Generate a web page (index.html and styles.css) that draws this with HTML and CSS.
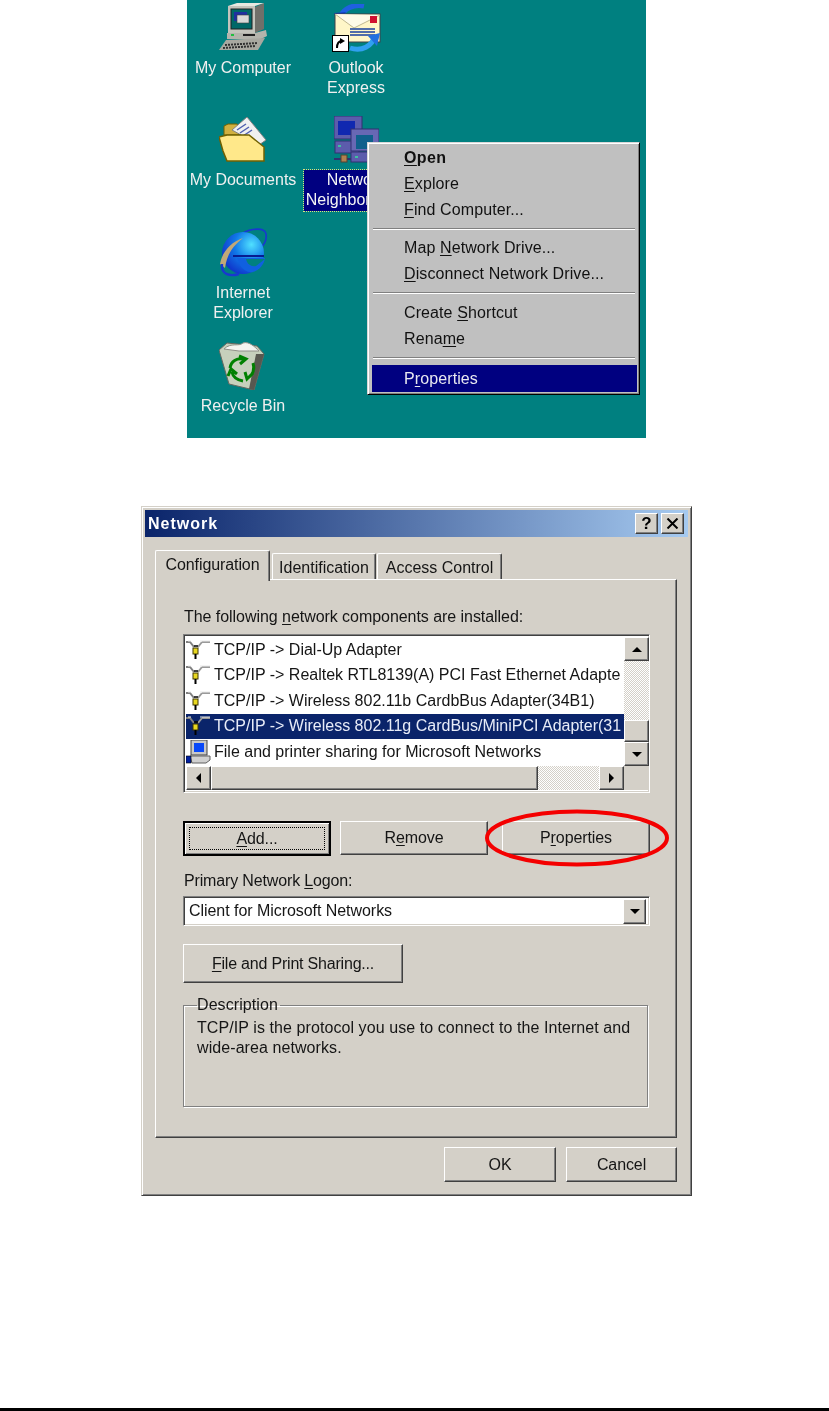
FILE: index.html
```html
<!DOCTYPE html>
<html lang="en">
<head>
    <meta charset="UTF-8">
    <meta name="viewport" content="width=device-width, initial-scale=1.0">
    <title>Network Neighborhood - Properties</title>
    <link rel="stylesheet" href="styles.css">
</head>
<body>
    <svg class="defs" width="0" height="0" aria-hidden="true">
        <defs>
            <symbol id="icon-tcp" viewBox="0 0 25 20">
                <path d="M0 2H4L8 7" fill="none" stroke="#808080" stroke-width="2"/>
                <path d="M16 2H24M16 2L12 7" fill="none" stroke="#9a9a9a" stroke-width="2"/>
                <path d="M5 1H2M14 1H24" stroke="#e8e8e8" stroke-width="1"/>
                <path d="M8 6L12 6" stroke="#000" stroke-width="1.5"/>
                <rect x="7" y="8" width="5" height="6" fill="#e8d820" stroke="#403800"/>
                <rect x="8.5" y="14" width="2" height="5" fill="#000"/>
            </symbol>
        </defs>
    </svg>

    <div class="desktop">
        <div class="desk-icon icon-computer">
            <svg width="49" height="49" viewBox="0 0 49 49">
                <path d="M36 4L45 0V26L36 30Z" fill="#70706a"/>
                <path d="M9 3L36 3L45 0L18 0Z" fill="#e8e8e0"/>
                <rect x="9" y="3" width="27" height="27" fill="#c4c4bc"/>
                <rect x="12" y="6" width="21" height="20" fill="#006868" stroke="#202020"/>
                <rect x="15" y="9" width="13" height="9" fill="#2030a0"/>
                <rect x="18" y="12" width="12" height="8" fill="#d8d8d8" stroke="#404040" stroke-width=".6"/>
                <path d="M8 30H36L47 27L48 33L42 36H8Z" fill="#b4b4ac"/>
                <rect x="12" y="31" width="3" height="2" fill="#20c040"/>
                <rect x="24" y="31" width="12" height="2" fill="#202020"/>
                <path d="M7 37L46 35L39 47H0Z" fill="#a8a8a0"/>
                <path d="M6 42L38 40M4 45L36 43" stroke="#303030" stroke-width="2" stroke-dasharray="2 1"/>
            </svg>
            <span class="desk-label">My Computer</span>
        </div>

        <div class="desk-icon icon-outlook">
            <svg width="49" height="48" viewBox="0 0 49 48">
                <path d="M32 2C22 0 12 4 8 13" fill="none" stroke="#2060e0" stroke-width="5"/>
                <path d="M2 9L14 8L7 18Z" fill="#1040c0"/>
                <rect x="3" y="10" width="45" height="28" fill="#fff6c8" stroke="#404048"/>
                <path d="M3 10L22 24L48 11" fill="#fffbe8" stroke="#c0b890"/>
                <rect x="38" y="12" width="7" height="7" fill="#d01030"/>
                <path d="M18 25H43M18 28H43M18 31H43" stroke="#1840a0" stroke-width="1.5"/>
                <path d="M18 44C30 48 40 42 43 32" fill="none" stroke="#30a0f0" stroke-width="5"/>
                <path d="M36 32L48 29L45 42Z" fill="#2070e0"/>
                <rect x="0.5" y="31.5" width="16" height="16" fill="#fff" stroke="#000"/>
                <path d="M5 44C5 39 7 37 10 37" fill="none" stroke="#000" stroke-width="2"/>
                <path d="M8 34L13 37L8 40Z" fill="#000"/>
            </svg>
            <span class="desk-label">Outlook<br>Express</span>
        </div>

        <div class="desk-icon icon-documents">
            <svg width="49" height="45" viewBox="0 0 49 45">
                <path d="M5 18V9L9 7H18L20 10V18Z" fill="#d0b040" stroke="#706000"/>
                <path d="M13 13L28 0L47 23L40 28Z" fill="#f0f0f0" stroke="#808080"/>
                <path d="M18 13L27 7M21 16L30 10M24 19L33 13" stroke="#5060b0" stroke-width="1.5"/>
                <path d="M0 20L8 18H30L45 30V44H8L4 34Z" fill="#ffe88a" stroke="#706000" stroke-width="1.5"/>
            </svg>
            <span class="desk-label">My Documents</span>
        </div>

        <div class="desk-icon icon-network">
            <svg width="45" height="47" viewBox="0 0 45 47">
                <rect x="0" y="0" width="28" height="23" fill="#5c5cac" stroke="#303070"/>
                <rect x="4" y="5" width="17" height="14" fill="#1028b0"/>
                <rect x="1" y="25" width="24" height="12" fill="#5c5cac" stroke="#303070"/>
                <rect x="4" y="29" width="3" height="2" fill="#40c0a0"/>
                <rect x="17" y="13" width="28" height="22" fill="#6868b4" stroke="#303070"/>
                <rect x="22" y="19" width="17" height="14" fill="#10608c"/>
                <rect x="17" y="36" width="25" height="10" fill="#5c5cac" stroke="#303070"/>
                <rect x="21" y="40" width="3" height="2" fill="#40c0a0"/>
                <path d="M0 43H17" stroke="#303070" stroke-width="2"/>
                <rect x="7" y="39" width="6" height="7" fill="#b08050" stroke="#504030"/>
            </svg>
            <span class="desk-label selected">Network<br>Neighborhood</span>
        </div>

        <div class="desk-icon icon-ie">
            <svg width="49" height="49" viewBox="0 0 49 49">
                <defs>
                    <radialGradient id="ie-fill" cx="0.7" cy="0.3" r="0.8">
                        <stop offset="0" stop-color="#50e0ff"/>
                        <stop offset="0.5" stop-color="#1078e8"/>
                        <stop offset="1" stop-color="#1030c8"/>
                    </radialGradient>
                </defs>
                <path d="M22 6C32 0 46 -1 47 6C48 11 45 17 41 21" fill="none" stroke="#1838d0" stroke-width="1.6"/>
                <circle cx="24" cy="25" r="21" fill="url(#ie-fill)"/>
                <path d="M18 30H46C45 36 41 42 34 44C29 45 24 42 21 37Z" fill="#1060e0"/>
                <path d="M14 28H45" stroke="#081c90" stroke-width="2"/>
                <path d="M27 31C28 36 32 39 37 38L46 31Z" fill="#008080"/>
                <path d="M1 36C3 24 12 14 24 10C14 18 8 26 6 40Z" fill="#c0a878"/>
                <path d="M3 36C2 46 10 49 20 46" fill="none" stroke="#1838d0" stroke-width="2.4"/>
            </svg>
            <span class="desk-label">Internet<br>Explorer</span>
        </div>

        <div class="desk-icon icon-recycle">
            <svg width="49" height="49" viewBox="0 0 49 49">
                <path d="M0 9L8 2L38 5L45 13L35 49L10 43Z" fill="#c6d0bc" stroke="#686860"/>
                <path d="M45 13L35 49L30 48L37 13Z" fill="#585850"/>
                <path d="M5 8C12 1 20 6 24 2C30 0 36 6 40 10L20 10Z" fill="#f4f4f0" stroke="#909088"/>
                <path d="M11 27C12 20 18 17 24 18M20 15L27 18L21 23" fill="none" stroke="#008000" stroke-width="3"/>
                <path d="M34 22C36 28 34 34 29 37M34 32L28 38L26 31" fill="none" stroke="#008000" stroke-width="3"/>
                <path d="M24 40C18 39 14 36 13 31M18 33L12 28L9 35" fill="none" stroke="#008000" stroke-width="3"/>
            </svg>
            <span class="desk-label">Recycle Bin</span>
        </div>

        <div class="context-menu">
            <div class="menu-item default"><span><u>O</u>pen</span></div>
            <div class="menu-item"><span><u>E</u>xplore</span></div>
            <div class="menu-item"><span><u>F</u>ind Computer...</span></div>
            <div class="menu-sep"></div>
            <div class="menu-item"><span>Map <u>N</u>etwork Drive...</span></div>
            <div class="menu-item"><span><u>D</u>isconnect Network Drive...</span></div>
            <div class="menu-sep wide"></div>
            <div class="menu-item"><span>Create <u>S</u>hortcut</span></div>
            <div class="menu-item"><span>Rena<u>m</u>e</span></div>
            <div class="menu-sep wide"></div>
            <div class="menu-item active"><span>P<u>r</u>operties</span></div>
        </div>
    </div>

    <div class="dialog">
        <div class="titlebar">
            <span class="title-text">Network</span>
            <div class="title-buttons">
                <div class="title-btn">?</div>
                <div class="title-btn">
                    <svg width="13" height="11" viewBox="0 0 13 11"><path d="M1.5 0.5L11.5 10.5M11.5 0.5L1.5 10.5" stroke="#000" stroke-width="2"/></svg>
                </div>
            </div>
        </div>

        <div class="tabs">
            <div class="tab active">Configuration</div>
            <div class="tab tab-ident">Identification</div>
            <div class="tab tab-access">Access Control</div>
        </div>

        <div class="panel">
            <div class="field-label">The following <u>n</u>etwork components are installed:</div>

            <div class="list">
                <div class="list-rows">
                    <div class="list-row"><svg class="row-icon" width="25" height="20"><use href="#icon-tcp"/></svg>TCP/IP -&gt; Dial-Up Adapter</div>
                    <div class="list-row"><svg class="row-icon" width="25" height="20"><use href="#icon-tcp"/></svg>TCP/IP -&gt; Realtek RTL8139(A) PCI Fast Ethernet Adapte</div>
                    <div class="list-row"><svg class="row-icon" width="25" height="20"><use href="#icon-tcp"/></svg>TCP/IP -&gt; Wireless 802.11b CardbBus Adapter(34B1)</div>
                    <div class="list-row selected-row"><svg class="row-icon" width="25" height="20"><use href="#icon-tcp"/></svg>TCP/IP -&gt; Wireless 802.11g CardBus/MiniPCI Adapter(31</div>
                    <div class="list-row">
                        <svg class="row-icon" width="25" height="24" viewBox="0 0 25 24">
                            <rect x="5" y="0" width="16" height="15" fill="#c8c8c8" stroke="#404040"/>
                            <rect x="8" y="3" width="10" height="9" fill="#0848f8"/>
                            <path d="M4 16H24V20L20 23H6Z" fill="#d0d0d0" stroke="#606060"/>
                            <rect x="0" y="16" width="5" height="7" fill="#0020a0" stroke="#000" stroke-width=".6"/>
                        </svg>File and printer sharing for Microsoft Networks</div>
                </div>
                <div class="vscroll">
                    <div class="scroll-btn"><i class="arrow up"></i></div>
                    <div class="scroll-track vtrack-top"></div>
                    <div class="scroll-thumb vthumb"></div>
                    <div class="scroll-btn"><i class="arrow down"></i></div>
                </div>
                <div class="hscroll">
                    <div class="scroll-btn"><i class="arrow left"></i></div>
                    <div class="scroll-thumb hthumb"></div>
                    <div class="scroll-track htrack"></div>
                    <div class="scroll-btn"><i class="arrow right"></i></div>
                </div>
                <div class="scroll-corner"></div>
            </div>

            <div class="button-row">
                <div class="btn btn-default btn-wide"><span><u>A</u>dd...</span></div>
                <div class="btn btn-wide"><span>R<u>e</u>move</span></div>
                <div class="btn btn-wide btn-last"><span>P<u>r</u>operties</span></div>
            </div>

            <div class="field-label logon-label">Primary Network <u>L</u>ogon:</div>
            <div class="combo">
                <span class="combo-value">Client for Microsoft Networks</span>
                <div class="scroll-btn combo-btn"><i class="arrow down"></i></div>
            </div>

            <div class="btn btn-sharing"><span><u>F</u>ile and Print Sharing...</span></div>

            <fieldset class="group">
                <legend>Description</legend>
                TCP/IP is the protocol you use to connect to the Internet and<br>wide-area networks.
            </fieldset>
        </div>

        <div class="dialog-footer">
            <div class="btn btn-ok"><span>OK</span></div>
            <div class="btn btn-cancel"><span>Cancel</span></div>
        </div>

        <svg class="callout" width="184" height="58" viewBox="0 0 184 58">
            <ellipse cx="92" cy="29" rx="90" ry="26.5" fill="none" stroke="#f40000" stroke-width="4"/>
        </svg>
    </div>

    <div class="page-rule"></div>
</body>
</html>
```

FILE: styles.css
```css
* { box-sizing: border-box; }

body {
    margin: 0;
    padding-left: 4px;
    background: white;
    display: flex;
    flex-direction: column;
    align-items: center;
    font-family: "Liberation Sans", Arial, sans-serif;
    font-size: 16px;
    line-height: 20px;
    color: #151515;
    height: 1411px;
    overflow: hidden;
}
.defs { position: absolute; }
u { text-underline-offset: 2px; }

/* desktop screenshot */
.desktop {
    position: relative;
    flex: none;
    width: 459px;
    height: 438px;
    background: #008080;
    filter: blur(.35px);
}
.desk-icon {
    position: absolute;
    display: flex;
    flex-direction: column;
    align-items: center;
    gap: 6px;
    width: 112px;
    text-align: center;
}
.desk-label {
    color: #f0f0f0;
    white-space: nowrap;
}
.desk-label.selected {
    background: #000080;
    outline: 1px dotted #e0e080;
    padding: 0 2px 1px;
    color: #f4f4f4;
}
.icon-computer { left: 0; top: 3px; }
.icon-outlook { left: 113px; top: 4px; }
.icon-documents { left: 0; top: 117px; gap: 8px; }
.icon-network { left: 113px; top: 116px; gap: 7px; }
.icon-ie { left: 0; top: 228px; }
.icon-recycle { left: 0; top: 341px; }

.context-menu {
    position: absolute;
    left: 180px;
    top: 142px;
    width: 273px;
    height: 253px;
    padding: 2px 2px 2px 4px;
    background: #c0c0c0;
    border: 1px solid;
    border-color: #d8d8d8 #000 #000 #d8d8d8;
    box-shadow: inset 1px 1px #fff, inset -1px -1px #808080;
    color: #111;
}
.menu-item {
    height: 26px;
    padding-left: 32px;
    display: flex;
    align-items: center;
    letter-spacing: .1px;
}
.menu-item.default { font-weight: bold; letter-spacing: .4px; }
.menu-item.active {
    height: 27px;
    background: #000080;
    color: #e8e8f0;
}
.menu-sep {
    height: 2px;
    margin: 5px 2px 5px 1px;
    background: #808080;
    border-bottom: 1px solid #fff;
}
.menu-sep.wide { margin-bottom: 6px; }

/* network dialog */
.dialog {
    position: relative;
    flex: none;
    width: 551px;
    height: 690px;
    margin-top: 68px;
    padding: 3px 3px 0;
    background: #d4d0c8;
    border: 1px solid;
    border-color: #d4d0c8 #404040 #404040 #d4d0c8;
    box-shadow: inset 1px 1px #fff, inset -1px -1px #808080;
    filter: blur(.35px);
}
.titlebar {
    height: 27px;
    display: flex;
    align-items: center;
    justify-content: space-between;
    padding: 0 4px 0 3px;
    background: linear-gradient(to right, #0a246a, #a6caf0);
}
.title-text {
    color: white;
    font-weight: bold;
    letter-spacing: 1px;
}
.title-buttons {
    display: flex;
    gap: 3px;
}
.title-btn {
    width: 23px;
    height: 21px;
    display: flex;
    align-items: center;
    justify-content: center;
    background: #d4d0c8;
    border: 1px solid;
    border-color: #fff #404040 #404040 #fff;
    box-shadow: inset -1px -1px #808080;
    font-weight: bold;
    font-size: 17px;
    color: #000;
}

.tabs {
    display: flex;
    align-items: flex-end;
    height: 29px;
    margin: 13px 0 0 10px;
}
.tab {
    position: relative;
    height: 26px;
    padding-top: 4px;
    text-align: center;
    background: #d4d0c8;
    border: 1px solid;
    border-bottom: none;
    border-color: #fff #404040 #d4d0c8 #fff;
    border-radius: 2px 2px 0 0;
    box-shadow: inset -1px 0 #808080;
}
.tab.active {
    z-index: 1;
    width: 115px;
    height: 31px;
    margin-bottom: -2px;
    padding-top: 4px;
    letter-spacing: -.1px;
}
.tab-ident { width: 104px; margin-left: 2px; }
.tab-access { width: 125px; margin-left: 1px; }

.panel {
    height: 559px;
    margin: 0 11px 0 10px;
    padding: 27px 26px 0 27px;
    border: 1px solid;
    border-color: #fff #404040 #404040 #fff;
    box-shadow: inset -1px -1px #808080;
}
.field-label {
    height: 20px;
    padding-left: 1px;
    letter-spacing: -.05px;
}

.list {
    display: grid;
    grid-template-columns: 1fr 25px;
    grid-template-rows: 129px 24px;
    height: 159px;
    margin-top: 7px;
    background: white;
    border: 1px solid;
    border-color: #808080 #fff #fff #808080;
    box-shadow: inset 1px 1px #404040, inset -1px -1px #d4d0c8;
    padding: 2px;
}
.list-rows {
    overflow: hidden;
    white-space: nowrap;
    background: white;
}
.list-row {
    display: flex;
    align-items: center;
    gap: 3px;
    height: 25.5px;
}
.row-icon { flex: none; }
.selected-row {
    background: #0a246a;
    color: #e8ecf8;
}
.vscroll {
    display: flex;
    flex-direction: column;
}
.hscroll {
    display: flex;
}
.scroll-corner { background: #d4d0c8; }
.scroll-btn {
    flex: none;
    width: 25px;
    height: 24px;
    display: flex;
    align-items: center;
    justify-content: center;
    background: #d4d0c8;
    border: 1px solid;
    border-color: #fff #404040 #404040 #fff;
    box-shadow: inset -1px -1px #808080;
}
.scroll-track {
    background: repeating-conic-gradient(#fff 0 25%, #d4d0c8 0 50%) 0 0 / 2px 2px;
}
.vtrack-top { height: 59px; }
.scroll-thumb {
    background: #d4d0c8;
    border: 1px solid;
    border-color: #fff #404040 #404040 #fff;
    box-shadow: inset -1px -1px #808080;
}
.vthumb { height: 22px; }
.hthumb { width: 327px; }
.htrack { width: 61px; }
.arrow {
    width: 0;
    height: 0;
    border: 5px solid transparent;
}
.arrow.up { border-bottom-color: #000; margin-top: -5px; }
.arrow.down { border-top-color: #000; margin-top: 5px; }
.arrow.left { border-right-color: #000; margin-left: -5px; }
.arrow.right { border-left-color: #000; margin-left: 5px; }

.btn {
    display: flex;
    align-items: center;
    justify-content: center;
    background: #d4d0c8;
    border: 1px solid;
    border-color: #fff #404040 #404040 #fff;
    box-shadow: inset -1px -1px #808080;
    letter-spacing: -.1px;
}
.button-row {
    display: flex;
    gap: 9px;
    height: 35px;
    margin-top: 28px;
}
.btn-wide { width: 148px; height: 34px; }
.btn-last { margin-left: 5px; }
.btn-default {
    position: relative;
    height: 35px;
    border: 2px solid #000;
    box-shadow: inset 1px 1px #fff, inset -1px -1px #808080;
}
.btn-default::before {
    content: "";
    position: absolute;
    inset: 4px;
    border: 1px dotted #000;
}
.logon-label { margin-top: 15px; letter-spacing: -.15px; }
.combo {
    display: flex;
    align-items: center;
    justify-content: space-between;
    height: 30px;
    margin-top: 5px;
    padding: 2px 3px 2px 5px;
    background: white;
    border: 1px solid;
    border-color: #808080 #fff #fff #808080;
    box-shadow: inset 1px 1px #404040, inset -1px -1px #d4d0c8;
    letter-spacing: -.05px;
}
.combo-btn { width: 23px; height: 25px; }
.btn-sharing {
    width: 220px;
    height: 39px;
    margin-top: 18px;
    letter-spacing: -.2px;
}
.group {
    width: 465px;
    height: 112px;
    margin: 12px 0 0;
    padding: 3px 13px 0;
    border: 1px solid #808080;
    box-shadow: 1px 1px #fff, inset 1px 1px #fff;
    letter-spacing: .08px;
}
.group legend {
    padding: 0 2px 0 0;
    margin-left: 0;
    height: 20px;
}

.dialog-footer {
    display: flex;
    justify-content: flex-end;
    gap: 10px;
    margin: 9px 11px 0 0;
}
.btn-ok { width: 112px; height: 35px; }
.btn-cancel { width: 111px; height: 35px; }

/* red marker around the properties button */
.callout {
    position: absolute;
    left: 343px;
    top: 302px;
}

.page-rule {
    flex: none;
    width: 100vw;
    height: 3px;
    margin: 212px 0 0 -4px;
    background: #000;
}
```
